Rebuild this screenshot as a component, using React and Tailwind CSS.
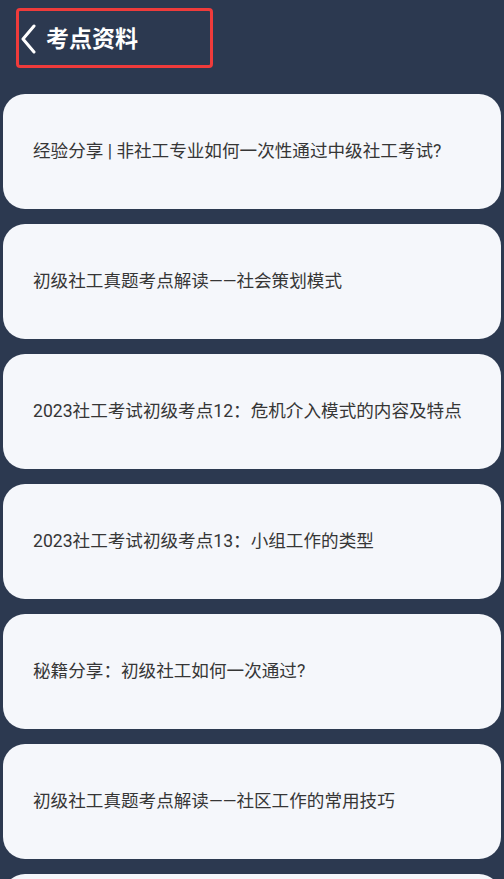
import React from "react";

const items = [
  "经验分享 | 非社工专业如何一次性通过中级社工考试?",
  "初级社工真题考点解读——社会策划模式",
  "2023社工考试初级考点12：危机介入模式的内容及特点",
  "2023社工考试初级考点13：小组工作的类型",
  "秘籍分享：初级社工如何一次通过?",
  "初级社工真题考点解读——社区工作的常用技巧",
  "",
];

export default function App() {
  return (
    <div
      className="w-[504px] h-[879px] overflow-hidden bg-[#2c3950]"
      style={{ fontFamily: 'Roboto, "Noto Sans CJK SC", sans-serif' }}
    >
      <div className="pt-[8px] pl-[16px]">
        <div className="w-[197px] h-[60px] border-[3px] border-[#ef3b3b] rounded-[4px] flex items-center">
          <svg width="16" height="30" viewBox="0 0 16 30" className="ml-[2px] mt-[2px]">
            <path d="M13 2 L2 15 L13 28" fill="none" stroke="#ffffff" strokeWidth="3" strokeLinecap="round" strokeLinejoin="round" />
          </svg>
          <span className="ml-[9px] mt-[2px] text-white font-bold text-[23px] leading-none">考点资料</span>
        </div>
      </div>
      <div className="mt-[26px] px-[3px] flex flex-col gap-[15px]">
        {items.map((t, i) => (
          <div
            key={i}
            className="h-[115px] shrink-0 rounded-[22px] bg-[#f5f7fb] flex items-center pl-[30px] text-[17.6px] text-[#363636]"
          >
            {t}
          </div>
        ))}
      </div>
    </div>
  );
}
